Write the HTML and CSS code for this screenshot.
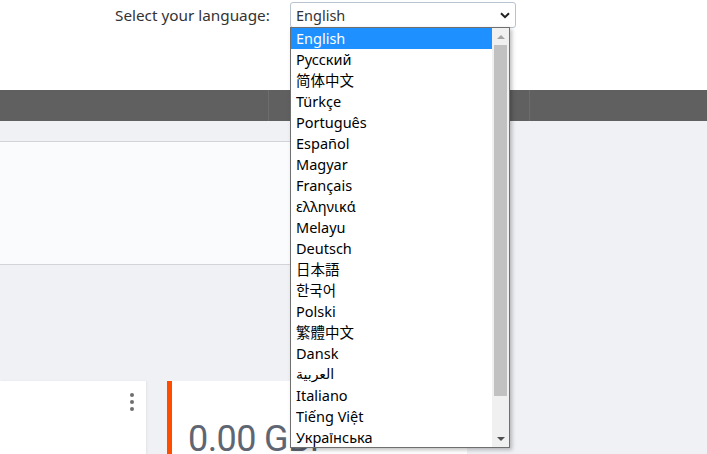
FILE: index.html
```html
<!DOCTYPE html>
<html>
<head>
<meta charset="utf-8">
<link rel="stylesheet" href="styles.css">
</head>
<body>
<header class="top">
  <label class="lang-label">Select your language:</label>
  <div class="combo">
    <span class="combo-value">English</span>
    <svg class="chev" width="10" height="7" viewBox="0 0 10 7"><path d="M1 1.2 L5 5.2 L9 1.2" fill="none" stroke="#222" stroke-width="2"/></svg>
  </div>
</header>
<nav class="navbar">
  <div class="nav-item first"></div>
  <div class="nav-item second"></div>
  <div class="nav-item rest"></div>
</nav>
<main class="content">
  <section class="panel"></section>
  <div class="cards">
    <div class="card card-a">
      <div class="kebab"><i></i><i></i><i></i></div>
    </div>
    <div class="card card-b">
      <div class="amount">0.00 GBP</div>
    </div>
  </div>
</main>

<div class="dropdown">
  <ul class="options">
    <li class="selected">English</li>
    <li>Русский</li>
    <li class="sc">简体中文</li>
    <li>Türkçe</li>
    <li>Português</li>
    <li>Español</li>
    <li>Magyar</li>
    <li>Français</li>
    <li>ελληνικά</li>
    <li>Melayu</li>
    <li>Deutsch</li>
    <li class="jp">日本語</li>
    <li class="kr">한국어</li>
    <li>Polski</li>
    <li class="tc">繁體中文</li>
    <li>Dansk</li>
    <li class="ar">العربية</li>
    <li>Italiano</li>
    <li>Tiếng Việt</li>
    <li>Українська</li>
  </ul>
  <div class="scrollbar">
    <div class="arrow up"></div>
    <div class="track"><div class="thumb"></div></div>
    <div class="arrow down"></div>
  </div>
</div>
</body>
</html>
```

FILE: styles.css
```css
* { box-sizing: border-box; }
html, body { margin: 0; padding: 0; }
body {
  width: 707px;
  height: 454px;
  overflow: hidden;
  background: #f0f1f5;
  font-family: "Noto Sans", "DejaVu Sans", sans-serif;
  position: relative;
}
.top {
  height: 90px;
  background: #ffffff;
  display: flex;
  align-items: flex-start;
  padding-left: 115px;
  padding-top: 2px;
}
.lang-label {
  font-size: 15.3px;
  color: #333;
  width: 175px;
  line-height: 26px;
}
.combo {
  width: 226px;
  height: 26px;
  border: 1px solid #b9c3cf;
  border-radius: 3px;
  display: flex;
  align-items: center;
  justify-content: space-between;
  padding: 0 5px 0 5px;
  background: #fff;
}
.combo-value { font-size: 14.5px; color: #333; }
.chev { margin-top: 1px; }
.navbar {
  height: 31px;
  background: #606060;
  display: flex;
}
.nav-item { height: 100%; }
.nav-item.first { width: 269px; border-right: 1px solid #6d6d6d; }
.nav-item.second { width: 261px; border-right: 1px solid #6d6d6d; }
.nav-item.rest { flex: 1; }
.content {
  padding-top: 20px;
}
.panel {
  width: 470px;
  height: 124px;
  background: #fafbfd;
  border-top: 1px solid #d3d4d8;
  border-bottom: 1px solid #d3d4d8;
}
.cards {
  margin-top: 116px;
  display: flex;
  gap: 21px;
}
.card {
  height: 80px;
  background: #fff;
  position: relative;
}
.card-a {
  width: 146px;
  box-shadow: 1px 0 2px rgba(0,0,0,0.06);
}
.kebab {
  position: absolute;
  right: 12px;
  top: 12px;
  display: flex;
  flex-direction: column;
  gap: 3px;
}
.kebab i {
  display: block;
  width: 4px;
  height: 4px;
  border-radius: 50%;
  background: #6f6f6f;
}
.card-b {
  width: 300px;
  border-left: 5px solid #ff4d00;
  padding-left: 16px;
  padding-top: 38px;
}
.amount {
  font-family: "Roboto", sans-serif;
  font-size: 36px;
  font-weight: 400;
  color: #5f6673;
  line-height: 40px;
  white-space: nowrap;
  letter-spacing: -0.6px;
}
.dropdown {
  position: absolute;
  left: 290px;
  top: 27px;
  width: 220px;
  height: 421px;
  border: 1px solid #6f6f6f;
  background: #fff;
  box-shadow: 2px 2px 4px rgba(0,0,0,0.25);
  display: flex;
}
.options {
  list-style: none;
  margin: 0;
  padding: 0;
  width: 201px;
}
.options li {
  height: 21px;
  line-height: 21px;
  font-size: 14.5px;
  color: #000;
  padding-left: 5px;
  white-space: nowrap;
}
.options li.selected { background: #1e90ff; color: #fff; }
.options li.sc { font-family: "Noto Sans", "Noto Sans CJK SC", sans-serif; }
.options li.tc { font-family: "Noto Sans", "Noto Sans CJK TC", sans-serif; }
.options li.jp { font-family: "Noto Sans", "Noto Sans CJK JP", sans-serif; }
.options li.kr { font-family: "Noto Sans", "Noto Sans CJK KR", sans-serif; }
.options li.ar { font-family: "DejaVu Sans", sans-serif; font-size: 14px; }
.scrollbar {
  width: 17px;
  background: #f0f0f0;
  display: flex;
  flex-direction: column;
}
.arrow {
  height: 17px;
  display: flex;
  align-items: center;
  justify-content: center;
}
.arrow.up::before {
  content: "";
  border-left: 4px solid transparent;
  border-right: 4px solid transparent;
  border-bottom: 4px solid #a3a3a3;
}
.arrow.down::before {
  content: "";
  border-left: 4px solid transparent;
  border-right: 4px solid transparent;
  border-top: 4px solid #505050;
}
.track {
  flex: 1;
  padding: 0 2px;
}
.thumb {
  height: 351px;
  background: #c1c1c1;
}
```
